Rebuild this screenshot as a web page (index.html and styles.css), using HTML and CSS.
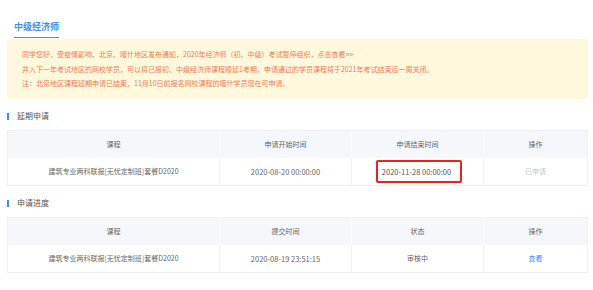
FILE: index.html
```html
<!DOCTYPE html>
<html lang="zh-CN">
  <head>
    <meta charset="UTF-8" />
    <meta name="viewport" content="width=device-width, initial-scale=1.0" />
    <title>中级经济师 - 延期申请</title>
    <link rel="stylesheet" href="styles.css">
  </head>
  <body>
    <div class="page">
      <div class="tabs">
        <span class="tab active">中级经济师</span>
      </div>

      <div class="notice">
        <p>同学您好，受疫情影响，北京、喀什地区发布通知，2020年经济师（初、中级）考试暂停组织，点击查看&gt;&gt;</p>
        <p>并入下一年考试地区的网校学员，可以将已报初、中级经济师课程顺延1考期，申请通过的学员课程将于2021年考试结束后一周关闭。</p>
        <p>注：北京地区课程延期申请已结束，11月10日前报名网校课程的喀什学员现在可申请。</p>
      </div>

      <h3 class="section-title">延期申请</h3>
      <table class="data-table">
        <colgroup>
          <col class="col-course" />
          <col class="col-time" />
          <col class="col-time" />
          <col class="col-op" />
        </colgroup>
        <thead>
          <tr>
            <th>课程</th>
            <th>申请开始时间</th>
            <th>申请结束时间</th>
            <th>操作</th>
          </tr>
        </thead>
        <tbody>
          <tr>
            <td>建筑专业两科联报[无忧定制班]套餐D2020</td>
            <td class="num">2020-08-20 00:00:00</td>
            <td class="num"><span class="highlight">2020-11-28 00:00:00</span></td>
            <td class="muted">已申请</td>
          </tr>
        </tbody>
      </table>

      <h3 class="section-title">申请进度</h3>
      <table class="data-table">
        <colgroup>
          <col class="col-course" />
          <col class="col-time" />
          <col class="col-time" />
          <col class="col-op" />
        </colgroup>
        <thead>
          <tr>
            <th>课程</th>
            <th>提交时间</th>
            <th>状态</th>
            <th>操作</th>
          </tr>
        </thead>
        <tbody>
          <tr>
            <td>建筑专业两科联报[无忧定制班]套餐D2020</td>
            <td class="num">2020-08-19 23:51:15</td>
            <td>审核中</td>
            <td><a class="link" href="#">查看</a></td>
          </tr>
        </tbody>
      </table>
    </div>
  </body>
</html>
```

FILE: styles.css
```css
* {
  margin: 0;
  padding: 0;
  box-sizing: border-box;
}

body {
  font-family: "Noto Sans CJK SC", "Noto Sans", sans-serif;
  background-color: #fff;
  color: #666;
}

.page {
  padding: 0 5px 0 7px;
}

.tabs {
  height: 31px;
  padding-top: 11px;
}

.tab {
  display: inline-block;
  margin-left: 7px;
  font-size: 9px;
  font-weight: bold;
  line-height: 14px;
  color: #3e8ef7;
  padding-bottom: 3px;
}

.tab.active {
  border-bottom: 1.5px solid #3e8ef7;
}

.notice {
  margin-top: 8px;
  background-color: #fef8dc;
  border-radius: 4px;
  padding: 8px 15px 8px 15px;
  color: #f37a55;
  font-size: 7px;
  line-height: 14.5px;
}

.section-title {
  display: flex;
  align-items: center;
  margin: 14px 0 10px;
  padding-left: 8px;
  border-left: 2px solid #3e8ef7;
  height: 7px;
  font-size: 8px;
  font-weight: normal;
  color: #555;
  line-height: 10px;
}

.data-table {
  width: 100%;
  border-collapse: collapse;
  table-layout: fixed;
  border: 1px solid #eef0f5;
  font-size: 7px;
}

.col-course {
  width: 212px;
}

.col-time {
  width: 132px;
}

.data-table th,
.data-table td {
  text-align: center;
  font-weight: normal;
  border-left: 1px solid #eef0f5;
  color: #666;
}

.data-table th {
  height: 28px;
  background-color: #f5f7fa;
  border-left-color: #fafbfd;
}

.data-table td {
  height: 27px;
}

.data-table td.num {
  font-size: 7.5px;
}

.data-table th:first-child,
.data-table td:first-child {
  border-left: none;
}

.highlight {
  display: inline-block;
  border: 2px solid #e5241f;
  border-radius: 2px;
  padding: 5px 9px 5px 4px;
  margin-left: 3px;
  color: #555;
  line-height: 9px;
}

.muted {
  color: #c5c8ce !important;
}

.link {
  color: #3e8ef7;
  text-decoration: none;
}
```
